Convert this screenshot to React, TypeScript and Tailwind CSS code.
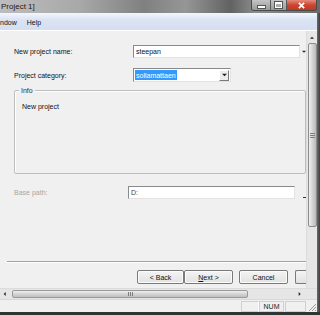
import React from "react";

function Arrow({ dir, className = "" }: { dir: "up" | "down" | "left" | "right"; className?: string }) {
  const pts = {
    up: "0,4 3,1 6,4",
    down: "0,1 6,1 3,4",
    left: "4,0 4,6 1,3",
    right: "1,0 1,6 4,3",
  }[dir];
  return (
    <svg viewBox="0 0 6 6" className={`shrink-0 ${className}`}>
      <polygon points={pts} fill="#222" />
    </svg>
  );
}

function Sunken({ className = "", children }: { className?: string; children?: React.ReactNode }) {
  return (
    <div className={`shrink-0 bg-white border border-t-[#8a8a8a] border-l-[#8a8a8a] border-b-[#e3e3e3] border-r-[#e3e3e3] flex items-center ${className}`}>
      {children}
    </div>
  );
}

function Btn({ label, className = "" }: { label: React.ReactNode; className?: string }) {
  return (
    <div className={`shrink-0 h-[14px] rounded-[2px] border border-[#7a7a7a] bg-[linear-gradient(#f4f4f4,#e2e2e2)] flex items-center justify-center shadow-[inset_0_0_0_1px_#fcfcfc] ${className}`}>
      {label}
    </div>
  );
}

export default function App() {
  return (
    <div className="w-[320px] h-[315px] overflow-hidden flex flex-col bg-[#3a3a3a] font-['Liberation_Sans',Arial,sans-serif] text-[7px] leading-none text-[#111]">
      {/* Title bar */}
      <div className="h-[13px] shrink-0 flex items-start bg-[linear-gradient(90deg,#bdbdbd_0%,#a8a8a8_25%,#808080_45%,#969696_58%,#626262_72%,#8c8c8c_80%,#6a6a6a_100%)]">
        <span className="pl-[1px] pt-[3px] text-[8px] text-[#202020]">Project 1]</span>
        <div className="ml-auto flex shrink-0 h-[11px] mr-[3px] rounded-b-[3px] overflow-hidden border border-t-0 border-[#4a4a4a]">
          <div className="w-[19px] flex items-center justify-center bg-[linear-gradient(#c4c4c4,#9a9a9a)] border-r border-[#5a5a5a]">
            <div className="w-[7px] h-[2px] bg-white shadow-[0_0_0_1px_#555] mt-[3px]" />
          </div>
          <div className="w-[16px] flex items-center justify-center bg-[linear-gradient(#c4c4c4,#9a9a9a)] border-r border-[#5a5a5a]">
            <div className="w-[7px] h-[6px] border border-t-2 border-white shadow-[0_0_0_1px_#555]" />
          </div>
          <div className="w-[29px] flex items-center justify-center bg-[linear-gradient(#e48a7c,#cc4530_50%,#bb3a26)]">
            <svg viewBox="0 0 10 8" className="w-[9px] h-[7px]">
              <path d="M2 1 L8 7 M8 1 L2 7" stroke="#ffffff" strokeWidth="2" />
            </svg>
          </div>
        </div>
      </div>

      <div className="flex-1 flex min-h-0">
        <div className="flex-1 flex flex-col min-w-0">
          {/* Menu bar */}
          <div className="h-[18px] shrink-0 flex items-end pb-[4px] gap-[10px] bg-[linear-gradient(#f3f6fc,#dbe3f3_40%,#d6dff1)] border-b border-white">
            <span>ndow</span>
            <span>Help</span>
          </div>

          {/* Body */}
          <div className="flex-1 flex min-h-0 bg-[#f0f0f0]">
            <div className="flex-1 flex flex-col min-w-0 overflow-hidden pt-[14px]">
              <div className="flex items-center h-[13px] pl-[14px]">
                <span className="w-[119px] shrink-0">New project name:</span>
                <Sunken className="w-[167px] h-[13px] pl-[2px]">steepan</Sunken>
                <Arrow dir="down" className="w-[4px] h-[4px] ml-[2px]" />
              </div>

              <div className="flex items-center h-[14px] pl-[14px] mt-[10px]">
                <span className="w-[119px] shrink-0">Project category:</span>
                <Sunken className="w-[98px] h-[14px] px-[1px] justify-between">
                  <span className="bg-[#3399ff] text-white h-[10px] px-[1px] flex items-center">sollamattaen</span>
                  <div className="w-[10px] h-[11px] border border-t-white border-l-white border-b-[#7a7a7a] border-r-[#7a7a7a] bg-[#ececec] flex items-center justify-center">
                    <Arrow dir="down" className="w-[5px] h-[5px]" />
                  </div>
                </Sunken>
              </div>

              <div className="relative ml-[14px] mt-[8px] h-[84px] border border-[#bdbdbd] shadow-[inset_1px_1px_0_#ffffff] rounded-[2px]">
                <span className="absolute left-[4px] -top-[4px] bg-[#f0f0f0] px-[2px] text-[#333]">Info</span>
                <div className="pl-[7px] pt-[12px]">New project</div>
              </div>

              <div className="flex items-center h-[13px] pl-[14px] mt-[12px]">
                <span className="w-[114px] shrink-0 text-[#a6a6a6]">Base path:</span>
                <Sunken className="w-[167px] h-[13px] pl-[2px] text-[#444]">D:</Sunken>
                <div className="w-[3px] h-[1px] shrink-0 bg-[#333] ml-[8px] mt-[10px]" />
              </div>

              <div className="mt-[62px] ml-[7px] h-[2px] border-t border-[#a0a0a0] border-b border-b-white" />

              <div className="flex mt-[7px] h-[14px]">
                <Btn className="ml-[137px] w-[47px]" label="< Back" />
                <Btn className="w-[49px] border-[#3c3c3c]" label={<span><span className="underline">N</span>ext &gt;</span>} />
                <Btn className="ml-[6px] w-[49px]" label="Cancel" />
                <div className="ml-[7px] flex-1 h-[14px] border border-r-0 border-[#7a7a7a] rounded-l-[2px] bg-[linear-gradient(#f4f4f4,#e2e2e2)]" />
              </div>
            </div>

            {/* Vertical scrollbar */}
            <div className="w-[11px] shrink-0 flex flex-col items-center bg-[#e6e6e6] border-l border-[#dcdcdc]">
              <Arrow dir="up" className="w-[4px] h-[4px] mt-[5px]" />
              <div className="mt-[3px] w-[9px] h-[184px] shrink-0 rounded-[2px] border border-[#8c8c8c] bg-[linear-gradient(90deg,#f0f0f0,#d4d4d4_50%,#b9b9b9)] flex items-center justify-center">
                <div className="w-[5px] h-[5px] border-y border-[#7e7e7e] flex items-center">
                  <div className="w-full h-[1px] bg-[#7e7e7e]" />
                </div>
              </div>
            </div>
          </div>

          {/* Horizontal scrollbar */}
          <div className="h-[11px] shrink-0 flex items-center bg-[#e6e6e6] border-t border-[#dcdcdc]">
            <Arrow dir="left" className="w-[4px] h-[4px] ml-[3px]" />
            <div className="ml-[5px] w-[236px] h-[8px] shrink-0 rounded-[2px] border border-[#999] bg-[linear-gradient(#f0f0f0,#d4d4d4_50%,#c0c0c0)] flex items-center justify-center">
              <div className="w-[5px] h-[4px] border-x border-[#7e7e7e] flex justify-center">
                <div className="w-[1px] h-full bg-[#7e7e7e]" />
              </div>
            </div>
            <Arrow dir="right" className="w-[4px] h-[4px] ml-auto mr-[15px]" />
          </div>

          {/* Status bar */}
          <div className="h-[13px] shrink-0 flex items-center bg-[#f0f0f0] border-t border-[#d8d8d8]">
            <div className="ml-[241px] shrink-0 w-[18px] h-[11px] border border-[#d0d0d0] border-r-white" />
            <div className="w-[25px] shrink-0 h-[11px] border border-[#d0d0d0] flex items-center justify-center text-[#222]">NUM</div>
            <div className="ml-[1px] shrink-0 w-[21px] h-[11px] border border-[#d0d0d0]" />
            <svg viewBox="0 0 10 10" className="ml-auto shrink-0 w-[10px] h-[10px] mt-[2px]">
              <path d="M9 2 L2 9 M9 5 L5 9 M9 8 L8 9" stroke="#9a9a9a" strokeWidth="1" />
            </svg>
          </div>
        </div>
        <div className="w-[3px] shrink-0 bg-[linear-gradient(90deg,#6a6a6a,#3e3e3e)]" />
      </div>
      <div className="h-[3px] shrink-0 bg-[#333333]" />
    </div>
  );
}
